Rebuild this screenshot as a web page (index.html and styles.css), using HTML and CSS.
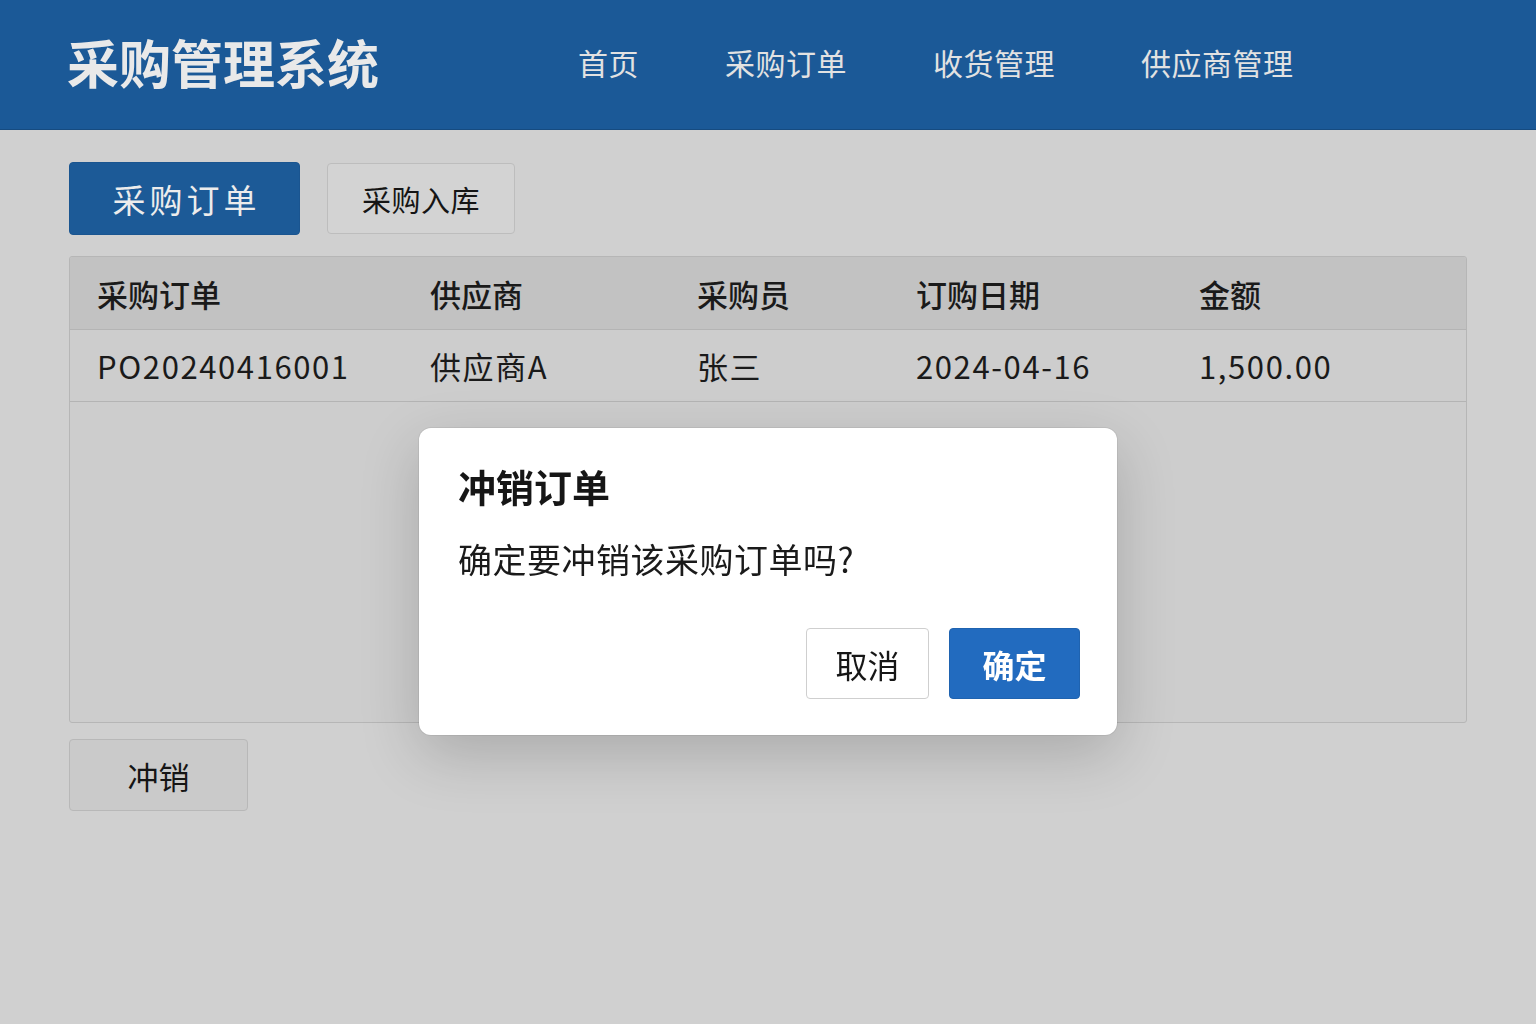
FILE: index.html
```html
<!DOCTYPE html>
<html lang="zh-CN">
<head>
    <meta charset="UTF-8">
    <meta name="viewport" content="width=device-width, initial-scale=1.0">
    <title>采购管理系统</title>
    <link rel="stylesheet" href="styles.css">
</head>
<body>
    <header class="top-bar">
        <h1 class="brand">采购管理系统</h1>
        <nav class="main-nav">
            <a href="#">首页</a>
            <a href="#">采购订单</a>
            <a href="#">收货管理</a>
            <a href="#">供应商管理</a>
        </nav>
    </header>

    <main class="content">
        <div class="tabs">
            <button class="tab active">采购订单</button>
            <button class="tab">采购入库</button>
        </div>

        <div class="order-table">
            <div class="row head">
                <div>采购订单</div>
                <div>供应商</div>
                <div>采购员</div>
                <div>订购日期</div>
                <div>金额</div>
            </div>
            <div class="row">
                <div>PO20240416001</div>
                <div>供应商A</div>
                <div>张三</div>
                <div>2024-04-16</div>
                <div>1,500.00</div>
            </div>
        </div>

        <button class="reverse-btn">冲销</button>
    </main>

    <div class="overlay">
        <div class="dialog">
            <h3>冲销订单</h3>
            <p>确定要冲销该采购订单吗?</p>
            <div class="dialog-actions">
                <button class="btn-cancel">取消</button>
                <button class="btn-ok">确定</button>
            </div>
        </div>
    </div>
</body>
</html>
```

FILE: styles.css
```css
* {
    margin: 0;
    padding: 0;
    box-sizing: border-box;
    font-family: 'Noto Sans CJK SC', 'Noto Sans', sans-serif;
}

body {
    background: #d0d0d0;
    color: #1a1a1a;
    min-height: 100vh;
}

.top-bar {
    height: 130px;
    background: #1b5997;
    display: flex;
    align-items: center;
    padding: 0 0 6px 67px;
    border-bottom: 1px solid #164b80;
}

.brand {
    font-size: 52px;
    font-weight: 700;
    color: #e9e9e9;
    width: 511px;
}

.main-nav {
    display: flex;
    gap: 86px;
}

.main-nav a {
    color: #e2e2e2;
    font-size: 30px;
    letter-spacing: 0.5px;
    text-decoration: none;
}

.content {
    padding: 32px 69px 0 69px;
}

.tabs {
    display: flex;
    gap: 27px;
    align-items: center;
}

.tab {
    height: 71px;
    width: 188px;
    border: 1px solid #bdbdbd;
    border-radius: 4px;
    background: #d3d3d3;
    font-size: 29px;
    color: #151515;
    letter-spacing: 0.5px;
    cursor: pointer;
}

.tab.active {
    height: 73px;
    width: 231px;
    background: #1c5a97;
    border-color: #1a5590;
    color: #ececec;
    font-size: 33px;
    letter-spacing: 4px;
    padding-left: 4px;
}

.order-table {
    margin-top: 21px;
    width: 1398px;
    height: 467px;
    border: 1px solid #b6b6b6;
    border-radius: 3px;
    background: #cdcdcd;
    overflow: hidden;
}

.row {
    display: grid;
    grid-template-columns: 333px 267px 219px 283px 1fr;
    height: 72px;
    align-items: center;
    border-bottom: 1px solid #b4b4b4;
    font-size: 31px;
}

.row div {
    padding-left: 27px;
}

.row.head {
    background: #c2c2c2;
    height: 73px;
    font-weight: 500;
}

.row:not(.head) div {
    letter-spacing: 1.6px;
}

.reverse-btn {
    margin-top: 16px;
    width: 179px;
    height: 72px;
    background: #cacaca;
    border: 1px solid #b8b8b8;
    border-radius: 4px;
    font-size: 31px;
    color: #151515;
    cursor: pointer;
}

.overlay {
    position: fixed;
    inset: 0;
    display: flex;
    justify-content: center;
    align-items: flex-start;
    padding-top: 428px;
}

.dialog {
    width: 698px;
    height: 307px;
    background: #fff;
    border-radius: 12px;
    box-shadow: 0 20px 60px rgba(0, 0, 0, 0.18), 0 0 0 1px rgba(0, 0, 0, 0.06);
    padding: 34px 37px 0 39px;
}

.dialog h3 {
    font-size: 38px;
    font-weight: 700;
    color: #161616;
    line-height: 48px;
}

.dialog p {
    margin-top: 25px;
    font-size: 34px;
    letter-spacing: 0.5px;
    color: #1a1a1a;
    line-height: 48px;
}

.dialog-actions {
    display: flex;
    justify-content: flex-end;
    gap: 20px;
    margin-top: 45px;
}

.btn-cancel, .btn-ok {
    height: 71px;
    border-radius: 4px;
    font-size: 32px;
    cursor: pointer;
}

.btn-cancel {
    width: 123px;
    background: #fff;
    border: 1px solid #cfcfcf;
    color: #161616;
}

.btn-ok {
    width: 131px;
    background: #226bbf;
    border: 1px solid #1f63b0;
    color: #fff;
    font-weight: 700;
}
```
